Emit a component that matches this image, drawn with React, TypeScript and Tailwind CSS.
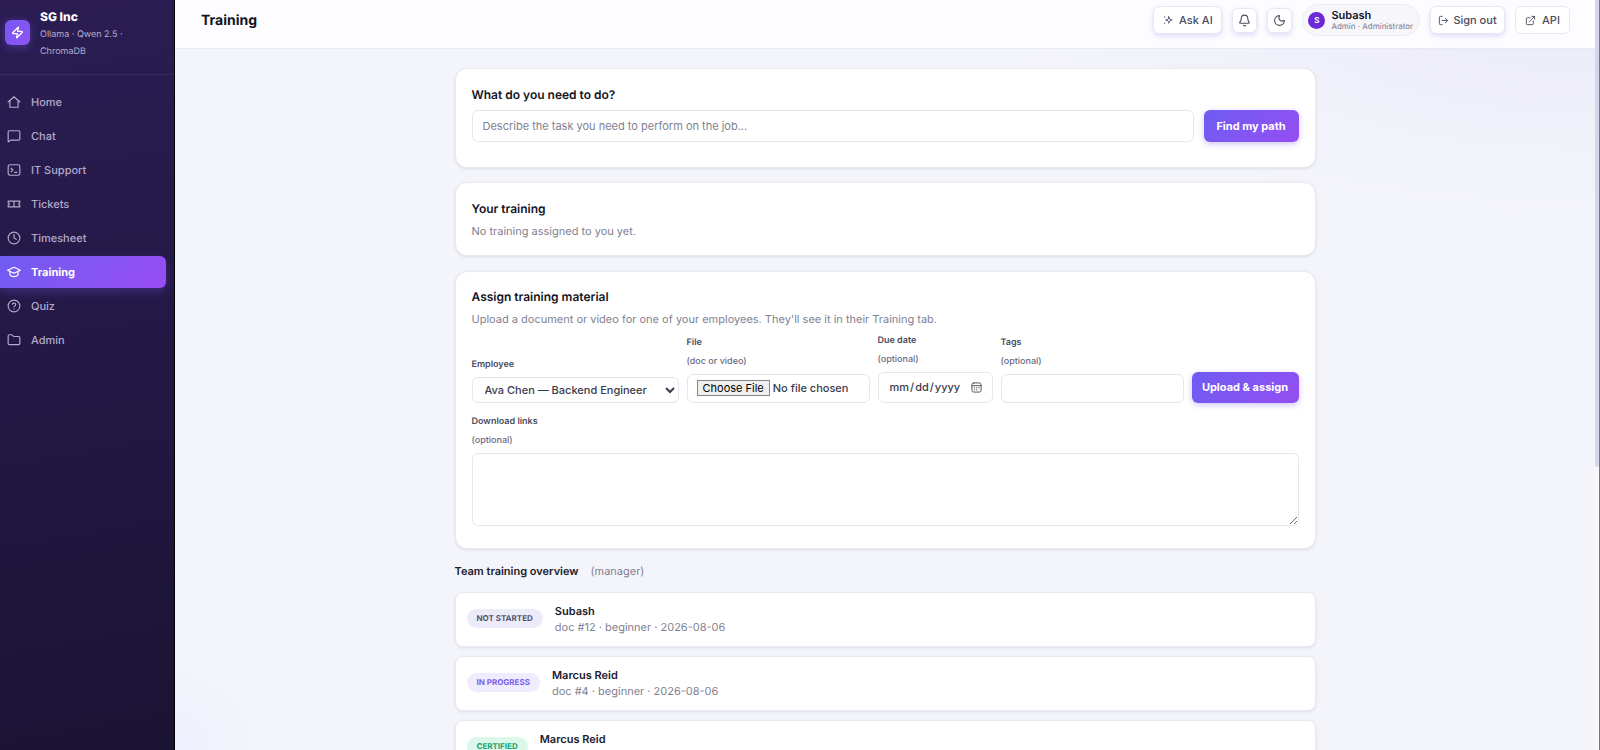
import type { ReactNode } from 'react'
import { Bell, CircleHelp, Clock, ExternalLink, Folder, LogOut, MessageSquare, Moon, Zap } from 'lucide-react'

function Svg({ children, size = 14 }: { children: ReactNode; size?: number }) {
  return (
    <svg
      width={size}
      height={size}
      viewBox="0 0 24 24"
      fill="none"
      stroke="currentColor"
      strokeWidth={2}
      strokeLinecap="round"
      strokeLinejoin="round"
      aria-hidden="true"
    >
      {children}
    </svg>
  )
}

const navItems = [
  { label: 'Home', icon: <Svg><path d="m2 12 10-9 10 9" /><path d="M5 10v11h14V10" /></Svg> },
  { label: 'Chat', icon: <MessageSquare size={14} /> },
  {
    label: 'IT Support',
    icon: <Svg><rect x="2" y="3" width="20" height="18" rx="3" /><path d="m7 9 3 3-3 3M13 16h4" /></Svg>,
  },
  {
    label: 'Tickets',
    icon: <Svg><path d="M2 7h20v3a2 2 0 0 0 0 4v3H2v-3a2 2 0 0 0 0-4zM12 7v10" /></Svg>,
  },
  { label: 'Timesheet', icon: <Clock size={14} /> },
  {
    label: 'Training',
    active: true,
    icon: <Svg><path d="m1 9 11-5 11 5-11 5z" /><path d="M5 11v6c3 4 11 4 14 0v-6" /></Svg>,
  },
  { label: 'Quiz', icon: <CircleHelp size={14} /> },
  { label: 'Admin', icon: <Folder size={14} /> },
]

const assignments = [
  { status: 'NOT STARTED', tone: 'bg-[#ebebfa] text-[#55556e]', name: 'Subash', detail: 'doc #12 · beginner · 2026-08-06' },
  { status: 'IN PROGRESS', tone: 'bg-[#efecfd] text-[#7c5cf0]', name: 'Marcus Reid', detail: 'doc #4 · beginner · 2026-08-06' },
  { status: 'CERTIFIED', tone: 'bg-[#dcf8ec] text-[#12a46f]', name: 'Marcus Reid' },
]

const card = 'rounded-xl border border-[#e8e9f1] bg-white px-4 shadow-[0_1px_3px_rgba(30,27,75,0.10)]'
const cardTitle = 'text-[12px] leading-[18px] font-semibold text-[#14141f]'
const field = 'rounded-md border border-[#e5e6ee] bg-white text-[#3a3a4c] outline-none'
const primary =
  'shrink-0 rounded-md bg-linear-135 from-[#6d5cf2] to-[#954df2] font-bold text-[11px] text-white shadow-[0_2px_6px_rgba(109,92,242,0.35)]'
const headerButton =
  'flex items-center justify-center rounded-md border border-[#e8e8f3] bg-white text-[11px] font-medium text-[#4b4b60]'
const lifted = 'shadow-[0_2px_5px_rgba(109,92,242,0.22)]'

function Sidebar() {
  return (
    <aside className="flex w-[175px] shrink-0 flex-col border-r border-black bg-linear-170 from-[#2b1d54] to-[#1b1334]">
      <div className="flex h-[75px] items-start gap-[10px] border-b border-[#382b5e] pl-[5px]">
        <span className="mt-5 flex size-[25px] shrink-0 items-center justify-center rounded-md bg-linear-135 from-[#7658f3] to-[#8f53f3] text-white shadow-[0_2px_8px_rgba(124,92,246,0.4)]">
          <Zap size={13} strokeWidth={2.4} />
        </span>
        <div className="pt-2">
          <p className="text-[12px] leading-[18px] font-extrabold text-white">SG Inc</p>
          <p className="w-24 text-[9px] leading-[17px] text-[#b6aecf]">Ollama · Qwen 2.5 · ChromaDB</p>
        </div>
      </div>
      <nav className="flex flex-col gap-[2px] pt-[11px] pr-2">
        {navItems.map((item) => (
          <a
            key={item.label}
            href="#"
            className={
              item.active
                ? 'flex h-8 items-center gap-[10px] rounded-r-md bg-linear-135 from-[#6f5cf2] to-[#974cf3] pl-[7px] text-[11px] font-bold text-white shadow-[0_4px_10px_rgba(109,92,242,0.3)]'
                : 'flex h-8 items-center gap-[10px] pl-[7px] text-[11px] font-medium text-[#b3aacb]'
            }
          >
            {item.icon}
            {item.label}
          </a>
        ))}
      </nav>
    </aside>
  )
}

function Header() {
  return (
    <header className="flex h-[49px] shrink-0 items-center justify-between border-b border-[#e8e9f1] bg-[#fdfdff] pr-[25px] pb-2 pl-[26px]">
      <h1 className="text-[14px] font-bold text-[#14141f]">Training</h1>
      <div className="flex items-center gap-[10px]">
        <button className={`${headerButton} ${lifted} h-7 w-[69px] gap-[6px]`}>
          <Svg size={10}>
            <path d="m14 4 2 6 6 2-6 2-2 6-2-6-6-2 6-2zM4 4v2M4 19v2" />
          </Svg>
          Ask AI
        </button>
        <button aria-label="Notifications" className={`${headerButton} ${lifted} size-[25px]`}>
          <Bell size={13} />
        </button>
        <button aria-label="Dark mode" className={`${headerButton} ${lifted} size-[25px]`}>
          <Moon size={13} />
        </button>
        <div className="flex h-8 items-center gap-[6px] rounded-full border border-[#ededf5] bg-[#f6f6fb] pr-[6px] pl-[5px]">
          <span className="flex size-[17px] items-center justify-center rounded-full bg-[#6d28d9] text-[8px] font-bold text-white">
            S
          </span>
          <div>
            <p className="text-[11px] leading-3 font-semibold text-[#14141f]">Subash</p>
            <p className="text-[8px] leading-[10px] text-[#77778c]">Admin · Administrator</p>
          </div>
        </div>
        <button className={`${headerButton} ${lifted} h-7 w-[75px] gap-1`}>
          <LogOut size={11} />
          Sign out
        </button>
        <a href="#" className={`${headerButton} h-7 w-[55px] gap-[6px]`}>
          <ExternalLink size={11} />
          API
        </a>
      </div>
    </header>
  )
}

function Label({ id, text, hint }: { id: string; text: string; hint?: string }) {
  return (
    <label htmlFor={id} className="block text-[9px] leading-[19px] font-semibold text-[#4b4b60]">
      {text}
      {hint && <span className="block font-medium text-[#6b6b85]">{hint}</span>}
    </label>
  )
}

function AssignCard() {
  return (
    <section className={`${card} pt-4 pb-[22px]`}>
      <h2 className={cardTitle}>Assign training material</h2>
      <p className="mt-1 text-[11px] leading-[18px] text-[#7f7f92]">
        Upload a document or video for one of your employees. They'll see it in their Training tab.
      </p>
      <form onSubmit={(e) => e.preventDefault()}>
        <div className="mt-[3px] flex items-end gap-2">
          <div className="w-[207px]">
            <Label id="employee" text="Employee" />
            <select id="employee" className={`${field} mt-[3px] block h-[26px] w-full px-2 text-[11px] font-medium`}>
              <option>Ava Chen — Backend Engineer</option>
            </select>
          </div>
          <div className="min-w-0 flex-1">
            <Label id="file" text="File" hint="(doc or video)" />
            <input
              id="file"
              type="file"
              className={`${field} mt-[3px] block h-[29px] w-full px-[9px] py-[5px] text-[11px] leading-4 font-medium file:mr-[3px] file:border file:border-[#85858d] file:bg-[#efefef] file:px-[5px] file:text-[11px] file:leading-[14px] file:font-normal file:text-black`}
            />
          </div>
          <div className="w-[115px]">
            <Label id="due" text="Due date" hint="(optional)" />
            <div className="relative mt-[3px]">
              <input
                id="due"
                type="date"
                className={`${field} block h-[31px] w-full px-[10px] text-[11px] font-medium [&::-webkit-calendar-picker-indicator]:opacity-0`}
              />
              <span className="pointer-events-none absolute inset-y-0 right-[11px] flex items-center text-[#4a4a55]">
                <Svg size={11}>
                  <rect x="2" y="2" width="20" height="20" rx="4" />
                  <path d="M2 8h20M7 12.5h1M12 12.5h1M17 12.5h1M7 17h1M12 17h1" />
                </Svg>
              </span>
            </div>
          </div>
          <div className="min-w-0 flex-1">
            <Label id="tags" text="Tags" hint="(optional)" />
            <input id="tags" type="text" className={`${field} mt-[3px] block h-[29px] w-full px-2 text-[11px]`} />
          </div>
          <button className={`${primary} h-[31px] w-[107px]`}>Upload &amp; assign</button>
        </div>
        <div className="mt-[9px]">
          <Label id="links" text="Download links" hint="(optional)" />
          <textarea id="links" className={`${field} mt-[3px] block h-[73px] w-full resize p-2 text-[11px]`} />
        </div>
      </form>
    </section>
  )
}

export default function App() {
  return (
    <div className="flex h-screen overflow-hidden bg-[#f4f5fa] font-[Inter,sans-serif] antialiased [text-rendering:geometricPrecision]">
      <Sidebar />
      <div className="flex min-w-0 flex-1 flex-col bg-[radial-gradient(ellipse_600px_220px_at_100%_0%,#ebeafa,transparent),radial-gradient(ellipse_90px_90px_at_0%_100%,#efeffe,transparent)]">
        <Header />
        <main className="min-h-0 flex-1 overflow-hidden px-6 pt-[19px]">
          <div className="mx-auto flex max-w-[861px] flex-col">
            <section className={`${card} pt-[17px] pb-[25px]`}>
              <h2 className={cardTitle}>
                <label htmlFor="task">What do you need to do?</label>
              </h2>
              <div className="mt-[6px] flex gap-[10px]">
                <input
                  id="task"
                  className={`${field} h-8 min-w-0 flex-1 px-[10px] text-[11px] placeholder:text-[#7f7f92]`}
                  placeholder="Describe the task you need to perform on the job..."
                />
                <button className={`${primary} h-8 w-[95px]`}>Find my path</button>
              </div>
            </section>

            <section className={`${card} mt-[14px] pt-[17px] pb-[15px]`}>
              <h2 className={cardTitle}>Your training</h2>
              <p className="mt-1 text-[11px] leading-[18px] text-[#7f7f92]">No training assigned to you yet.</p>
            </section>

            <div className="mt-[15px]">
              <AssignCard />
            </div>

            <h2 className="mt-[13px] flex gap-3 text-[11px] leading-[18px] font-semibold text-[#20202c]">
              Team training overview
              <span className="font-normal text-[#7f7f92]">(manager)</span>
            </h2>

            <ul className="mt-3 flex flex-col gap-[9px]">
              {assignments.map((a) => (
                <li
                  key={a.status}
                  className="flex h-[55px] shrink-0 items-center gap-3 rounded-lg border border-[#e8e9f1] bg-white px-[11px] pb-[2px] shadow-[0_1px_3px_rgba(30,27,75,0.10)]"
                >
                  <span className={`rounded-full px-[10px] text-[8px] leading-[19px] font-bold ${a.tone}`}>{a.status}</span>
                  <div className="h-8 text-[11px] leading-4">
                    <p className="font-semibold text-[#20202c]">{a.name}</p>
                    {a.detail && <p className="text-[#7f7f92]">{a.detail}</p>}
                  </div>
                </li>
              ))}
            </ul>
          </div>
        </main>
      </div>
      {/* scroll track */}
      <div className="w-[5px] shrink-0 border-r border-[#77778a] bg-[#f7f7fc]">
        <div className="h-[467px] rounded-b-sm bg-[#d5d5ec]" />
      </div>
    </div>
  )
}
